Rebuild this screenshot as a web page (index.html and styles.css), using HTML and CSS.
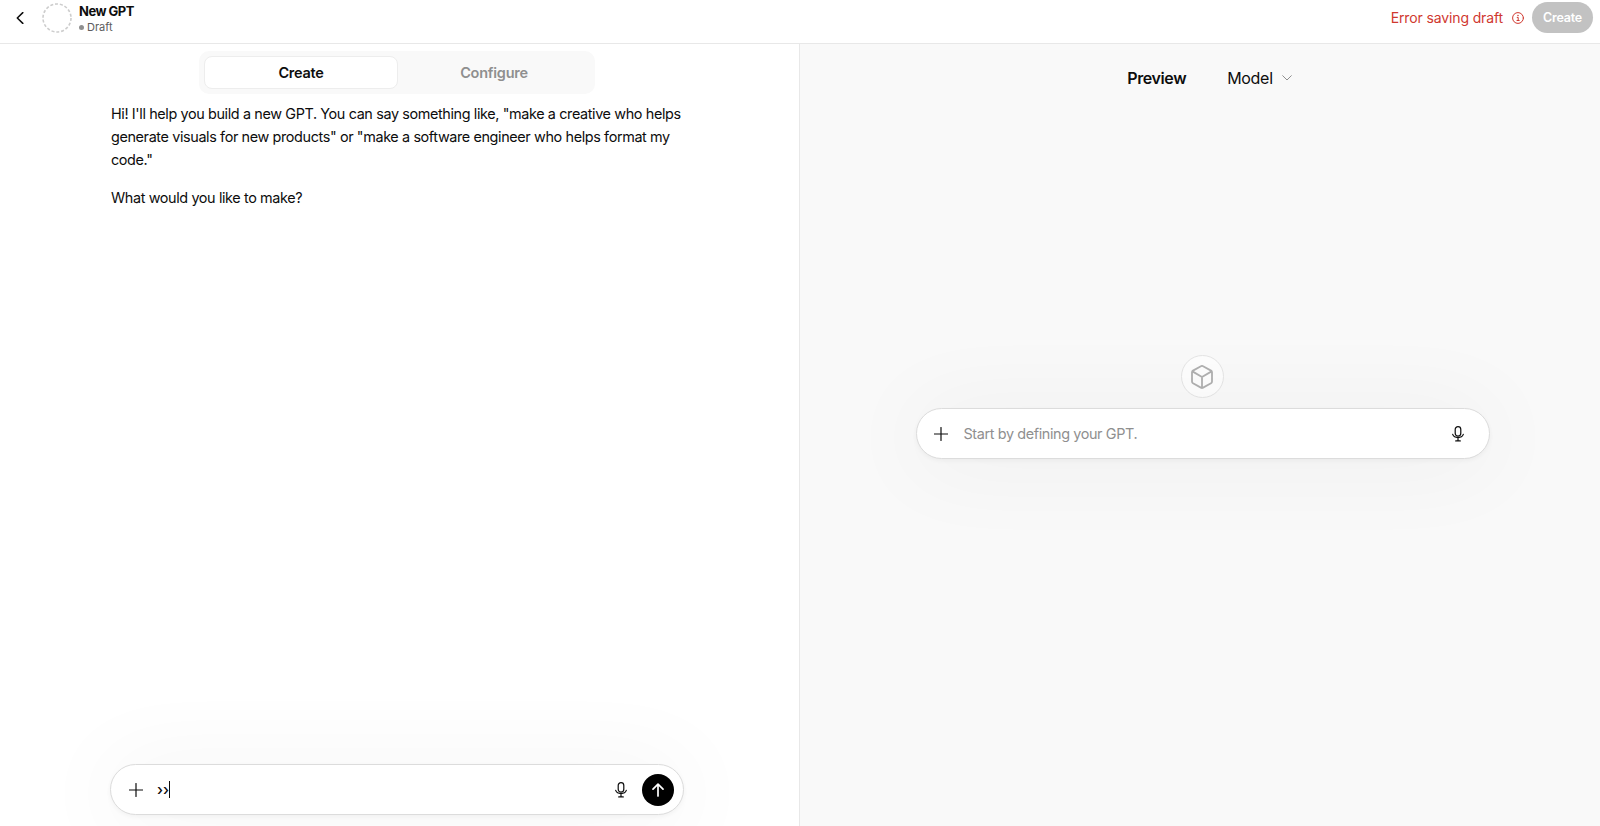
FILE: index.html
```html
<!DOCTYPE html>
<html lang="en">
<head>
  <meta charset="UTF-8" />
  <meta name="viewport" content="width=device-width, initial-scale=1.0"/>
  <title>New GPT</title>
  <link rel="stylesheet" href="styles.css">
</head>
<body>
  <header>
    <svg class="back" viewBox="0 0 8 12"><path d="M6.8 .6 1.3 6l5.5 5.4"/></svg>
    <svg class="avatar" viewBox="0 0 30 30"><circle cx="15" cy="15" r="14"/></svg>
    <div class="title">
      <h1>New GPT</h1>
      <div class="draft"><span class="dot"></span><span>Draft</span></div>
    </div>
    <span class="error">Error saving draft</span>
    <svg class="info" viewBox="0 0 12 12"><circle cx="6" cy="6" r="5.4"/><path d="M5.2 5.4h1v2.9M5 8.5h2.2"/><circle class="fill" cx="6" cy="3.5" r=".75"/></svg>
    <button class="create">Create</button>
  </header>

  <main>
    <section class="builder">
      <div class="tabs">
        <button class="tab active">Create</button>
        <button class="tab">Configure</button>
      </div>
      <div class="message">
        <p>Hi! I'll help you build a new GPT. You can say something like, "make a creative who helps<br>generate visuals for new products" or "make a software engineer who helps format my<br>code."</p>
        <p>What would you like to make?</p>
      </div>
      <div class="composer">
        <svg class="plus" viewBox="0 0 14 14"><path d="M7 .5v13M.5 7h13"/></svg>
        <span class="typed">››</span><span class="caret"></span>
        <svg class="mic" viewBox="0 0 12 16"><rect x="3.2" y=".7" width="5.6" height="9.4" rx="2.8"/><path d="M.7 8.4a5.5 4.3 0 0 0 10.6 0M6 11.8v2.9M3.7 14.9h4.6"/></svg>
        <button class="send"><svg viewBox="0 0 12 14"><path d="M6 13V1.5M1 6.2l5-5 5 5"/></svg></button>
      </div>
    </section>

    <section class="preview">
      <div class="preview-head">
        <h2>Preview</h2>
        <span class="model">Model</span>
        <svg class="chevron" viewBox="0 0 10 6"><path d="M.7.7 5 5 9.3.7"/></svg>
      </div>
      <div class="cube">
        <svg viewBox="0 0 22 24"><path d="M9.9 1.2 2 5.6Q1 6.2 1 7.3v9.2q0 1.1 1 1.7l7.9 4.4q1.1.6 2.2 0l7.9-4.4q1-.6 1-1.7V7.3q0-1.1-1-1.7l-7.9-4.4q-1.1-.6-2.2 0ZM1.4 6.4 11 12l9.6-5.6M11 12v11"/></svg>
      </div>
      <div class="composer">
        <svg class="plus" viewBox="0 0 14 14"><path d="M7 .5v13M.5 7h13"/></svg>
        <span class="placeholder">Start by defining your GPT.</span>
        <svg class="mic" viewBox="0 0 12 16"><rect x="3.2" y=".7" width="5.6" height="9.4" rx="2.8"/><path d="M.7 8.4a5.5 4.3 0 0 0 10.6 0M6 11.8v2.9M3.7 14.9h4.6"/></svg>
      </div>
    </section>
  </main>
</body>
</html>
```
FILE: styles.css
```css
* {
  box-sizing: border-box;
}
body {
  margin: 0;
  height: 826px;
  display: flex;
  flex-direction: column;
  overflow: hidden;
  background: #fff;
  color: #0d0d0d;
  font-family: Inter, "Liberation Sans", sans-serif;
  font-size: 14.4px;
  letter-spacing: -0.375px;
  white-space: nowrap;
}
h1, h2, p {
  margin: 0;
}
button {
  border: none;
  padding: 0;
  font-family: inherit;
}
svg {
  display: block;
  flex: none;
  fill: none;
  stroke: currentColor;
  stroke-linecap: round;
  stroke-linejoin: round;
}
header {
  height: 44px;
  flex: none;
  display: flex;
  align-items: center;
  padding: 0 7px 8px 16px;
  border-bottom: 1px solid #e8e8e8;
}
.back {
  width: 8px;
  height: 12px;
  stroke-width: 1.5;
}
.avatar {
  width: 30px;
  height: 30px;
  margin-left: 18px;
  color: #cdcdcd;
  stroke-width: 1.6;
  stroke-dasharray: 3 1.89;
  stroke-linecap: butt;
}
.title {
  margin: 2px 0 0 7px;
}
h1 {
  font-size: 13px;
  font-weight: 650;
  line-height: 17px;
  letter-spacing: -0.5px;
}
.draft {
  display: flex;
  align-items: center;
  gap: 3px;
  font-size: 11px;
  line-height: 15px;
  letter-spacing: 0;
  color: #5d5d5d;
}
.dot {
  width: 5px;
  height: 5px;
  border-radius: 50%;
  background: #8f8f8f;
}
.error {
  margin-left: auto;
  font-size: 14px;
  letter-spacing: -0.13px;
  color: #d0382f;
}
.info {
  width: 12px;
  height: 12px;
  margin: 0 8px 0 9px;
  color: #d0382f;
}
.info .fill {
  fill: currentColor;
  stroke: none;
}
.create {
  width: 61px;
  height: 31px;
  border-radius: 16px;
  background: #c2c2c2;
  color: #fff;
  font-size: 12.5px;
  font-weight: 600;
  letter-spacing: -0.2px;
}
main {
  flex: 1;
  display: grid;
  grid-template-columns: 800px 800px;
}
.builder {
  display: flex;
  flex-direction: column;
  align-items: center;
  padding: 7px 5px 11px 0;
  border-right: 1px solid #e8e8e8;
  overflow: hidden;
}
.tabs {
  display: flex;
  width: 396px;
  height: 43px;
  padding: 5px;
  border-radius: 10px;
  background: #f9f9f9;
}
.tab {
  flex: 1;
  background: none;
  border-radius: 8px;
  font-size: 14.5px;
  font-weight: 600;
  letter-spacing: -0.25px;
  color: #8f8f8f;
}
.tab.active {
  background: #fff;
  border: 1px solid #ededed;
  color: #0d0d0d;
}
.message {
  width: 572px;
  margin-top: 8px;
  line-height: 23.2px;
}
.message p + p {
  margin-top: 14px;
}
.composer {
  display: flex;
  align-items: center;
  width: 574px;
  height: 51px;
  padding: 0 9px 0 18px;
  border: 1px solid #dcdcdc;
  border-radius: 26px;
  background: #fff;
  box-shadow: 0 4px 90px 8px rgba(0, 0, 0, 0.045), 0 2px 4px rgba(0, 0, 0, 0.04);
}
.builder .composer {
  margin-top: auto;
}
.plus {
  width: 14px;
  height: 14px;
  stroke-width: 1.2;
}
.typed {
  margin-left: 14px;
  font-size: 15px;
  font-weight: 500;
  letter-spacing: 0;
}
.caret {
  width: 1px;
  height: 17px;
  background: #0d0d0d;
}
.mic {
  width: 12px;
  height: 16px;
  margin-left: auto;
  stroke-width: 1.2;
}
.send {
  display: flex;
  align-items: center;
  justify-content: center;
  width: 32px;
  height: 32px;
  margin-left: 15px;
  border-radius: 50%;
  background: #000;
  color: #fff;
}
.send svg {
  width: 12px;
  height: 14px;
  stroke-width: 1.7;
}
.preview {
  display: flex;
  flex-direction: column;
  align-items: center;
  padding-left: 5px;
  background: #f9f9f9;
  overflow: hidden;
}
.preview-head {
  display: flex;
  align-items: center;
  height: 67px;
  margin-left: 14px;
  font-size: 16px;
  letter-spacing: -0.3px;
}
h2 {
  font-size: 16px;
  font-weight: 600;
  letter-spacing: -0.4px;
}
.model {
  margin-left: 41px;
}
.chevron {
  width: 10px;
  height: 6px;
  margin-left: 9px;
  color: #8f8f8f;
}
.cube {
  display: flex;
  align-items: center;
  justify-content: center;
  width: 43px;
  height: 43px;
  margin: 244px 0 10px;
  border: 1px solid #e5e5e5;
  border-radius: 50%;
  background: #fdfdfd;
  color: #b0b0b0;
}
.cube svg {
  width: 22px;
  height: 24px;
  margin-right: 1px;
  stroke-width: 1.8;
}
.placeholder {
  margin-left: 16px;
  color: #8f8f8f;
}
.preview .composer {
  padding: 0 25px 0 17px;
}
```
